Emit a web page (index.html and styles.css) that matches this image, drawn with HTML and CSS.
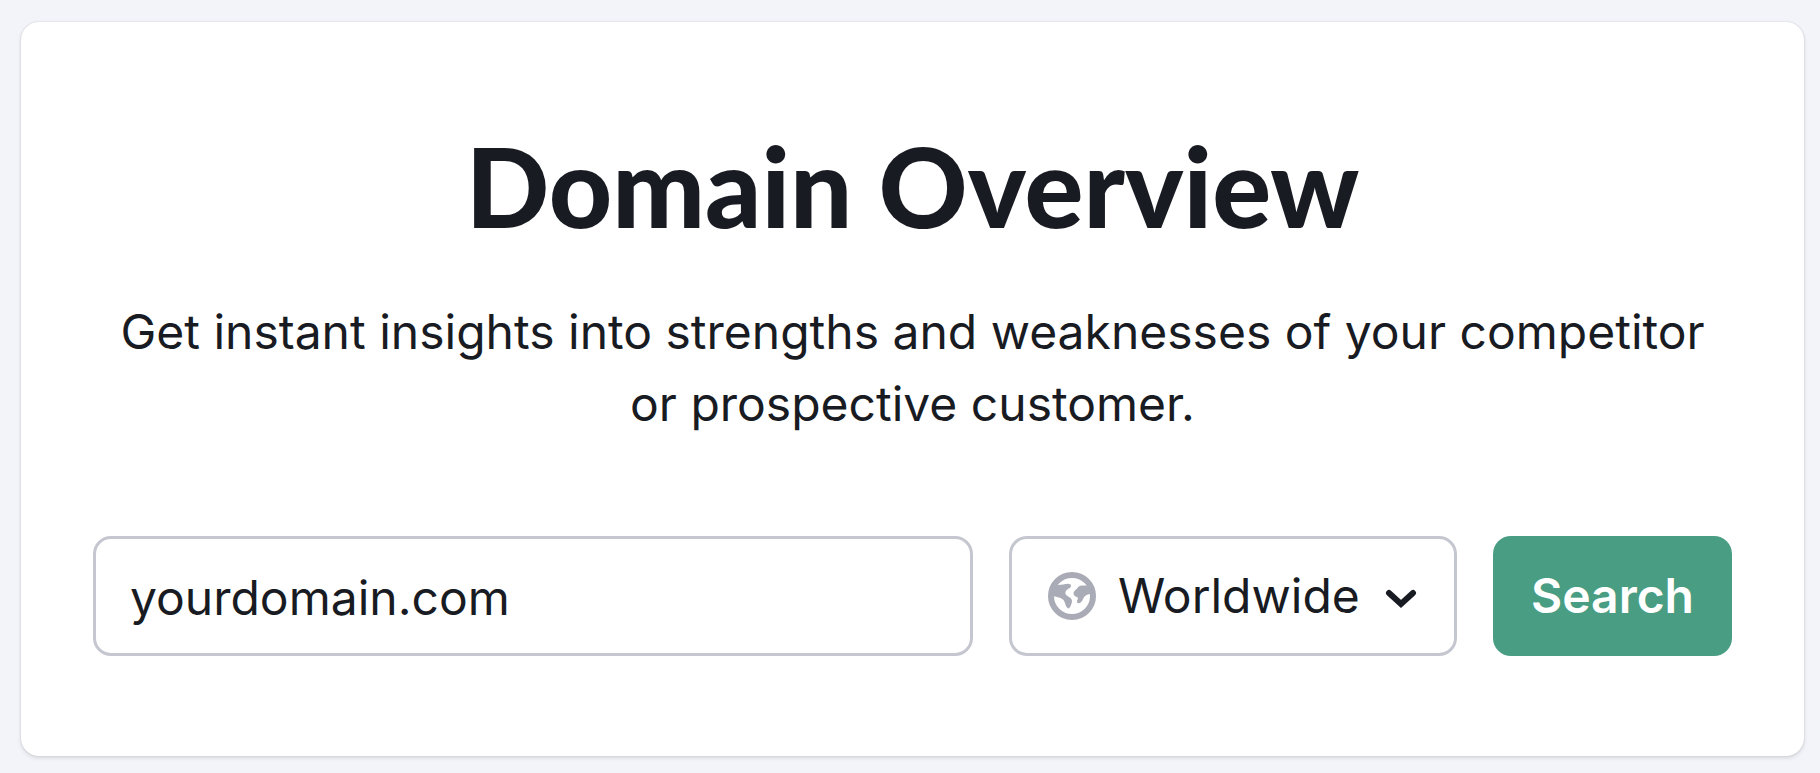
FILE: index.html
```html
<!DOCTYPE html>
<html lang="en">
<head>
<meta charset="utf-8">
<title>Domain Overview</title>
<link rel="stylesheet" href="styles.css">
</head>
<body>
<main class="card">
  <h1 class="title">Domain Overview</h1>
  <p class="lead">Get instant insights into strengths and weaknesses of your competitor or prospective customer.</p>
  <form class="search">
    <input class="domain" type="text" value="yourdomain.com" aria-label="Domain">
    <div class="region">
      <svg class="globe" viewBox="0 0 48 48" aria-hidden="true">
        <circle cx="24" cy="24" r="21" fill="none" stroke="currentColor" stroke-width="6"/>
        <path fill="currentColor" d="M4 18C6 15 8 13 10 13C15 13 20 10.500 22.500 12.500C24 15 22 16 20 17C18 18 17 20 17.500 22C19 25 24 25 24 29C24 31 22 36.500 20.500 36.500C17 35 18 31 15 27.500C12 25 8 25 4 23.500Z"/>
        <path fill="currentColor" d="M43.500 13.500L36 13.500C33 13.500 31 13.500 29.500 16C28 18 25.500 19 25.500 21C25.500 23.500 27 24.500 29 25C31 26 29 28 29 30C30 33 34 30.500 35 27C36 24 39 22 44 21.500Z"/>
      </svg>
      <select class="region-select" aria-label="Region">
        <option>Worldwide</option>
      </select>
      <svg class="chevron" viewBox="0 0 32 20" aria-hidden="true">
        <path d="M4 4L16 15L28 4" fill="none" stroke="currentColor" stroke-width="6" stroke-linecap="round" stroke-linejoin="miter"/>
      </svg>
    </div>
    <button class="submit" type="submit">Search</button>
  </form>
</main>
</body>
</html>
```
FILE: styles.css
```css
* {
  box-sizing: border-box;
}

body {
  margin: 0;
  padding: 22px 16px 16px 21px;
  background: #f3f4f9;
  color: #191b23;
  font-family: Inter, "Liberation Sans", sans-serif;
  font-size: 48px;
}

.card {
  padding: 96px 72px 100px;
  background: #fff;
  border-radius: 18px;
  box-shadow: 0 0 2px rgba(25, 27, 35, 0.16), 0 2px 4px rgba(25, 27, 35, 0.12);
}

.title {
  margin: 0 0 44px;
  font-family: Lato, Inter, sans-serif;
  font-size: 110px;
  font-weight: 900;
  line-height: 134px;
  text-align: center;
}

.lead {
  margin: 0 0 96px;
  line-height: 72px;
  text-align: center;
}

.search {
  display: flex;
  gap: 36px;
}

.domain,
.region-select,
.submit {
  height: 120px;
  margin: 0;
  border-radius: 18px;
  color: inherit;
  font: inherit;
}

.domain,
.region-select {
  border: 3px solid #c4c7cf;
  background: #fff;
}

.domain {
  flex: 1;
  min-width: 0;
  padding: 2px 34px 0;
}

.region {
  position: relative;
  flex: 0 0 448px;
}

.region-select {
  width: 100%;
  padding: 0 92px 2px 106px;
  appearance: none;
}

.globe,
.chevron {
  position: absolute;
  pointer-events: none;
}

.globe {
  top: 36px;
  left: 39px;
  width: 48px;
  height: 48px;
  color: #a9abb6;
}

.chevron {
  top: 53px;
  right: 40px;
  width: 32px;
  height: 20px;
}

.submit {
  flex: 0 0 239px;
  padding: 0 0 2px;
  border: 0;
  background: #489d82;
  color: #fff;
  font-weight: 600;
}
```
